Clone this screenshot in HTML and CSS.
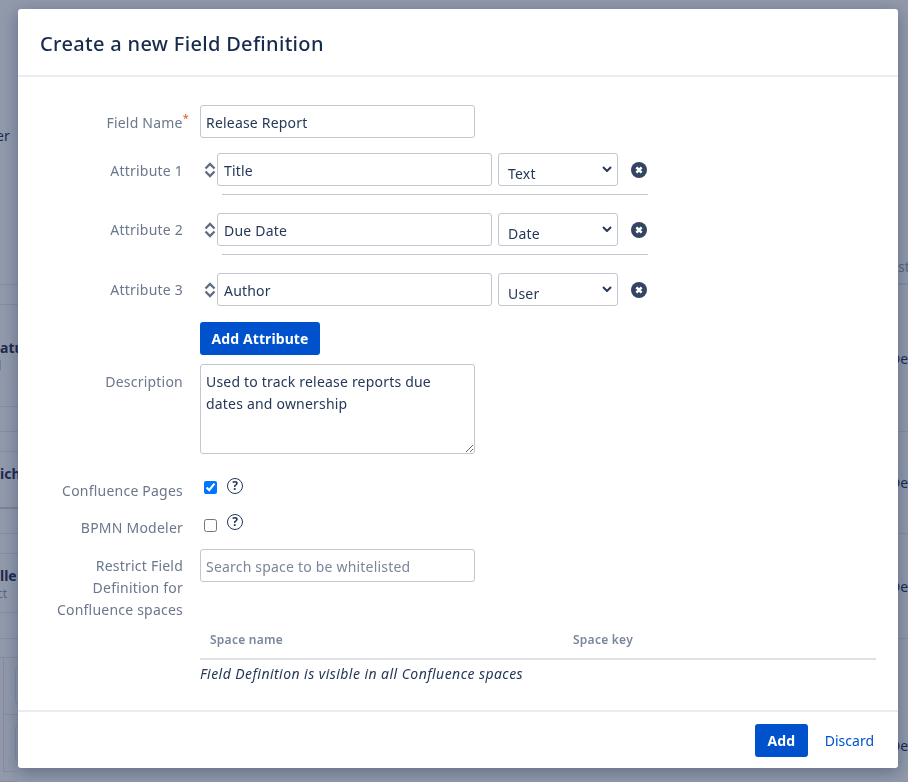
FILE: index.html
```html
<!DOCTYPE html>
<html lang="en">
<head>
  <meta charset="UTF-8">
  <title>Create a new Field Definition</title>
  <link rel="stylesheet" href="styles.css">
</head>
<body>

  <!-- Page behind the dialog: only the table edges show -->
  <div class="backdrop">
    <div class="strip strip-left">
      <div class="cell cell-first"><span class="frag frag-er">er</span></div>
      <div class="cell"></div>
      <div class="cell cell-mid"><b class="frag">atu</b><small class="frag frag-d">d</small></div>
      <div class="cell"></div>
      <div class="cell"></div>
      <div class="cell cell-mid cell-heavy"><b class="frag frag-up">ich</b></div>
      <div class="cell"></div>
      <div class="cell"></div>
      <div class="cell cell-mid"><b class="frag">lle</b><small class="frag frag-ct">ct</small></div>
      <div class="cell"></div>
      <div class="cell"></div>
      <div class="cell cell-boxed"><div class="ghost-box"></div></div>
      <div class="cell cell-boxed"><div class="ghost-box"></div></div>
      <div class="cell"></div>
    </div>
    <div class="strip strip-right">
      <div class="cell cell-last"><span class="frag frag-st">st</span></div>
      <div class="cell cell-mid"><span class="frag frag-de">De</span></div>
      <div class="cell cell-mid"><span class="frag frag-de">De</span></div>
      <div class="cell cell-mid"><span class="frag frag-de">De</span></div>
      <div class="cell cell-end"><span class="frag frag-de">De</span></div>
    </div>
  </div>

  <!-- Dialog -->
  <div class="modal">
    <div class="modal-header">
      <h1>Create a new Field Definition</h1>
    </div>

    <form class="modal-body">
      <div class="row row-name">
        <label class="field-label">Field Name<sup class="required">*</sup></label>
        <input class="text-input" type="text" value="Release Report">
      </div>

      <div class="row row-attr">
        <label class="field-label">Attribute 1</label>
        <div class="attr-fields">
          <svg class="sort-icon" viewBox="0 0 12 18"><path d="M1.5 7.5L6 3l4.5 4.5M1.5 10.5L6 15l4.5-4.5"/></svg>
          <input class="text-input attr-input" type="text" value="Title">
          <div class="select-wrap">
            <select class="type-select"><option>Text</option></select>
            <svg class="chevron" viewBox="0 0 10 6"><path d="M1 1l4 4 4-4"/></svg>
          </div>
          <svg class="remove-icon" viewBox="0 0 16 16"><circle cx="8" cy="8" r="8"/><path d="M5.4 5.4l5.2 5.2M10.6 5.4l-5.2 5.2"/></svg>
        </div>
      </div>
      <div class="attr-divider"></div>

      <div class="row row-attr">
        <label class="field-label">Attribute 2</label>
        <div class="attr-fields">
          <svg class="sort-icon" viewBox="0 0 12 18"><path d="M1.5 7.5L6 3l4.5 4.5M1.5 10.5L6 15l4.5-4.5"/></svg>
          <input class="text-input attr-input" type="text" value="Due Date">
          <div class="select-wrap">
            <select class="type-select"><option>Date</option></select>
            <svg class="chevron" viewBox="0 0 10 6"><path d="M1 1l4 4 4-4"/></svg>
          </div>
          <svg class="remove-icon" viewBox="0 0 16 16"><circle cx="8" cy="8" r="8"/><path d="M5.4 5.4l5.2 5.2M10.6 5.4l-5.2 5.2"/></svg>
        </div>
      </div>
      <div class="attr-divider"></div>

      <div class="row row-attr">
        <label class="field-label">Attribute 3</label>
        <div class="attr-fields">
          <svg class="sort-icon" viewBox="0 0 12 18"><path d="M1.5 7.5L6 3l4.5 4.5M1.5 10.5L6 15l4.5-4.5"/></svg>
          <input class="text-input attr-input" type="text" value="Author">
          <div class="select-wrap">
            <select class="type-select"><option>User</option></select>
            <svg class="chevron" viewBox="0 0 10 6"><path d="M1 1l4 4 4-4"/></svg>
          </div>
          <svg class="remove-icon" viewBox="0 0 16 16"><circle cx="8" cy="8" r="8"/><path d="M5.4 5.4l5.2 5.2M10.6 5.4l-5.2 5.2"/></svg>
        </div>
      </div>

      <div class="row row-add">
        <span class="field-label"></span>
        <button type="button" class="btn-primary btn-attr">Add Attribute</button>
      </div>

      <div class="row row-desc">
        <label class="field-label">Description</label>
        <textarea class="text-input text-area">Used to track release reports due dates and ownership</textarea>
      </div>

      <div class="row row-check row-confluence">
        <label class="field-label">Confluence Pages</label>
        <input class="check" type="checkbox" checked>
        <span class="help">?</span>
      </div>

      <div class="row row-check row-bpmn">
        <label class="field-label">BPMN Modeler</label>
        <input class="check" type="checkbox">
        <span class="help">?</span>
      </div>

      <div class="row row-restrict">
        <label class="field-label">Restrict Field Definition for Confluence spaces</label>
        <input class="text-input" type="text" placeholder="Search space to be whitelisted">
      </div>

      <div class="spaces">
        <div class="spaces-head">
          <span class="col-name">Space name</span>
          <span>Space key</span>
        </div>
        <p class="spaces-empty">Field Definition is visible in all Confluence spaces</p>
      </div>
    </form>

    <div class="modal-footer">
      <button type="button" class="btn-primary btn-add">Add</button>
      <a class="link-discard" href="#">Discard</a>
    </div>
  </div>

</body>
</html>
```

FILE: styles.css
```css
/* Global */
* {
  box-sizing: border-box;
}
html, body {
  height: 100%;
}
body {
  margin: 0;
  overflow: hidden;
  background: #9199ab;
  font-family: "Noto Sans", Arial, sans-serif;
  font-size: 14px;
  color: #172b4d;
}

/* Page behind the dialog */
.backdrop {
  display: flex;
  justify-content: space-between;
  height: 782px;
}
.strip {
  display: grid;
  overflow: hidden;
  color: #1c2b50;
}
.strip-left {
  width: 18px;
  grid-template-rows: 285px 20px 102px 25px 20px 57px 25px 20px 59px 26px 19px 57px 57px 10px;
}
.strip-right {
  width: 10px;
  grid-template-rows: 285px 147px 102px 105px 143px;
}
.cell {
  display: flex;
  flex-direction: column;
  border-bottom: 1px solid #848da1;
  min-width: 0;
}
.cell-first {
  padding-top: 126px;
}
.cell-mid {
  justify-content: center;
}
.cell-mid b {
  margin-top: 2px;
}
.cell-heavy {
  border-bottom: 2px solid #7b8498;
}
.cell-last {
  justify-content: flex-end;
  padding-bottom: 7px;
  color: #5a6582;
  border-bottom-width: 2px;
}
.cell-end {
  border-bottom: 0;
  padding-top: 97px;
}
.cell-boxed {
  padding: 10px 0 0 11px;
  border-left: 1px solid #848da1;
  margin-left: 3px;
}
.ghost-box {
  width: 20px;
  height: 36px;
  border: 1px solid #848da1;
  border-radius: 3px;
}
.frag {
  display: block;
  white-space: nowrap;
  line-height: 19px;
}
small.frag {
  font-size: 12px;
  line-height: 18px;
  color: #5a6582;
}
.cell-mid .frag-up {
  margin-top: -12px;
}
.frag-er {
  margin-left: -4px;
}
.frag-d {
  margin-left: -6px;
}
.frag-ct {
  margin-left: -3px;
}
.frag-de {
  margin-left: -8px;
}

/* Dialog */
.modal {
  position: fixed;
  left: 18px;
  top: 9px;
  width: 880px;
  height: 759px;
  background: #fff;
  border-radius: 3px;
  box-shadow: 0 4px 16px rgba(9, 30, 66, 0.35);
  display: flex;
  flex-direction: column;
}
.modal-header {
  height: 68px;
  padding: 4px 22px 0;
  border-bottom: 2px solid #ebecf0;
  display: flex;
  align-items: center;
}
.modal-header h1 {
  margin: 0;
  font-size: 20px;
  font-weight: 500;
  line-height: 24px;
  letter-spacing: 0.32px;
  color: #172b4d;
}
.modal-body {
  flex: 1;
  padding: 28px 22px 0 0;
}
.modal-footer {
  height: 58px;
  border-top: 2px solid #ebecf0;
  padding: 12px 24px 0 0;
  display: flex;
  justify-content: flex-end;
  align-items: flex-start;
}

/* Form rows */
.row {
  display: flex;
  align-items: flex-start;
}
.field-label {
  flex: none;
  width: 165px;
  margin-right: 17px;
  text-align: right;
  color: #6b778c;
  line-height: 22px;
  padding-top: 7px;
  letter-spacing: 0.22px;
}
.required {
  display: inline-block;
  margin-right: -6px;
  color: #e5532d;
  font-size: 11px;
  line-height: 0;
}
.text-input {
  display: block;
  width: 275px;
  height: 33px;
  padding: 2px 5px 0;
  border: 1px solid #c1c7d0;
  border-radius: 3px;
  background: #fff;
  font: 14px "Noto Sans", Arial, sans-serif;
  letter-spacing: 0.2px;
  color: #253858;
  outline: none;
}
.text-input::placeholder {
  color: #7a869a;
  opacity: 1;
}
.attr-input {
  padding-left: 6px;
}
.text-area {
  height: 90px;
  padding: 6px 20px 5px 5px;
  line-height: 22px;
  resize: vertical;
}
.row-name {
  margin-bottom: 15px;
}
.row-attr ~ .row-attr .field-label {
  padding-top: 6px;
}
.attr-fields {
  display: flex;
  align-items: center;
}
.sort-icon {
  width: 12px;
  height: 18px;
  margin: 0 1px 0 4px;
  fill: none;
  stroke: #5e6c84;
  stroke-width: 2.3;
}
.select-wrap {
  position: relative;
  margin-left: 6px;
}
.type-select {
  display: block;
  width: 120px;
  height: 33px;
  padding: 7px 24px 0 9px;
  border: 1px solid #c1c7d0;
  border-radius: 3px;
  background: #fff;
  font: 14px "Noto Sans", Arial, sans-serif;
  letter-spacing: 0.2px;
  color: #253858;
  appearance: none;
  outline: none;
}
.chevron {
  position: absolute;
  right: 6px;
  top: 13px;
  width: 10px;
  height: 6px;
  fill: none;
  stroke: #253858;
  stroke-width: 2;
  pointer-events: none;
}
.remove-icon {
  width: 16px;
  height: 16px;
  margin-left: 13px;
  fill: #344563;
  stroke: #fff;
  stroke-width: 2.6;
}
.remove-icon circle {
  stroke: none;
}
.attr-divider {
  width: 426px;
  height: 1px;
  margin: 8px 0 18px 204px;
  background: #c1c7d0;
}
.row-add {
  margin: 16px 0 9px;
}
.row-add .field-label {
  padding: 0;
}

/* Buttons */
.btn-primary {
  height: 33px;
  border: 0;
  border-radius: 3px;
  background: #0052cc;
  color: #fff;
  font: 700 14px "Noto Sans", Arial, sans-serif;
  letter-spacing: 0.1px;
  cursor: pointer;
}
.btn-attr {
  width: 120px;
}
.btn-add {
  width: 53px;
}
.link-discard {
  margin-left: 17px;
  line-height: 33px;
  color: #0052cc;
  text-decoration: none;
}

/* Checkbox rows */
.row-desc {
  margin-bottom: 22px;
}
.row-check .field-label {
  padding-top: 4px;
}
.check {
  width: 13px;
  height: 13px;
  margin: 5px 0 0 4px;
  accent-color: #0075ff;
}
.help {
  width: 16px;
  height: 16px;
  margin-left: 10px;
  border: 1.6px solid #253858;
  border-radius: 50%;
  font-size: 12px;
  font-weight: 700;
  line-height: 13px;
  text-align: center;
  color: #253858;
}
.row-confluence {
  height: 38px;
}
.row-confluence .help {
  margin-top: 2px;
}
.row-bpmn {
  height: 35px;
}
.row-bpmn .field-label {
  padding-top: 3px;
}
.row-restrict {
  height: 72px;
}
.row-restrict .field-label {
  padding: 6px 0 0 35px;
}

/* Spaces table */
.spaces {
  margin-left: 182px;
}
.spaces-head {
  display: flex;
  height: 39px;
  padding-top: 10px;
  border-bottom: 2px solid #dfe1e6;
  font-size: 12px;
  font-weight: 600;
  line-height: 18px;
  letter-spacing: 0.25px;
  color: #7a869a;
}
.col-name {
  width: 373px;
  padding-left: 10px;
}
.spaces-empty {
  margin: 4px 0 0;
  font-style: italic;
  line-height: 20px;
  letter-spacing: 0.44px;
  color: #253858;
}
```
